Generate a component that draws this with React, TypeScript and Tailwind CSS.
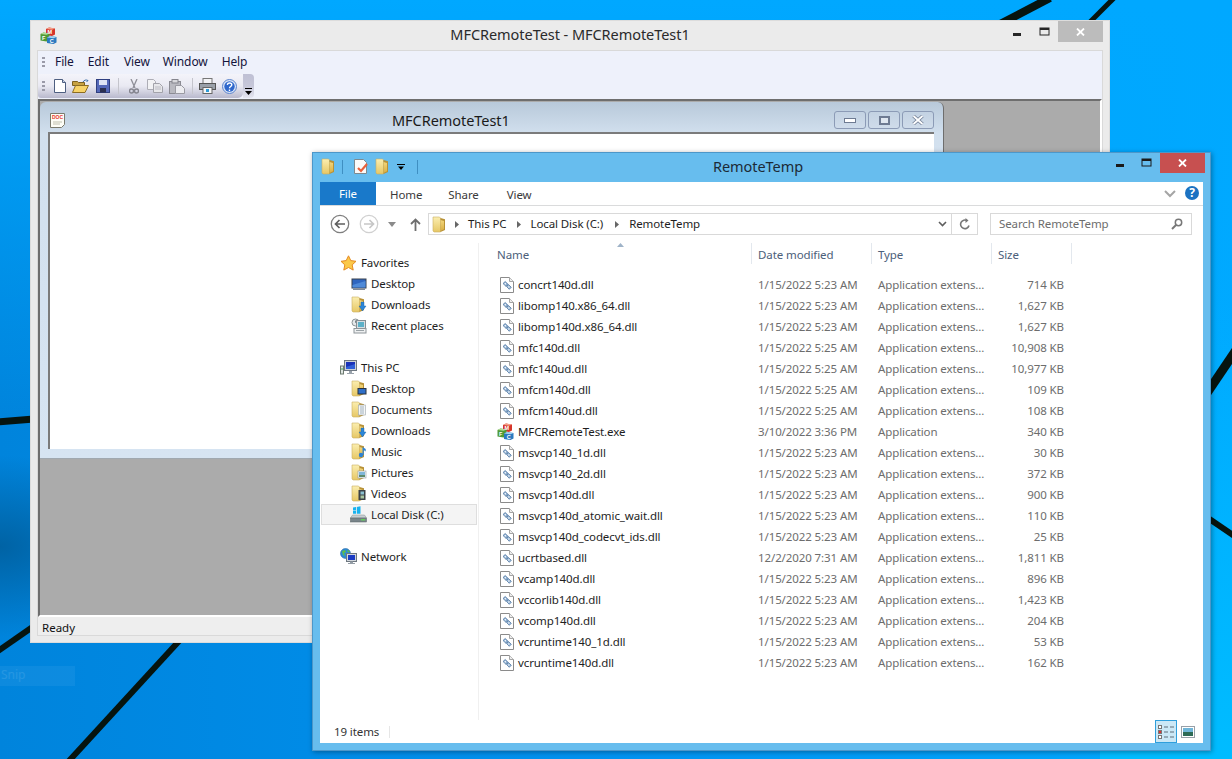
const files = [
  ["concrt140d.dll", "1/15/2022 5:23 AM", "Application extens...", "714 KB"],
  ["libomp140.x86_64.dll", "1/15/2022 5:23 AM", "Application extens...", "1,627 KB"],
  ["libomp140d.x86_64.dll", "1/15/2022 5:23 AM", "Application extens...", "1,627 KB"],
  ["mfc140d.dll", "1/15/2022 5:25 AM", "Application extens...", "10,908 KB"],
  ["mfc140ud.dll", "1/15/2022 5:25 AM", "Application extens...", "10,977 KB"],
  ["mfcm140d.dll", "1/15/2022 5:25 AM", "Application extens...", "109 KB"],
  ["mfcm140ud.dll", "1/15/2022 5:25 AM", "Application extens...", "108 KB"],
  ["MFCRemoteTest.exe", "3/10/2022 3:36 PM", "Application", "340 KB"],
  ["msvcp140_1d.dll", "1/15/2022 5:23 AM", "Application extens...", "30 KB"],
  ["msvcp140_2d.dll", "1/15/2022 5:23 AM", "Application extens...", "372 KB"],
  ["msvcp140d.dll", "1/15/2022 5:23 AM", "Application extens...", "900 KB"],
  ["msvcp140d_atomic_wait.dll", "1/15/2022 5:23 AM", "Application extens...", "110 KB"],
  ["msvcp140d_codecvt_ids.dll", "1/15/2022 5:23 AM", "Application extens...", "25 KB"],
  ["ucrtbased.dll", "12/2/2020 7:31 AM", "Application extens...", "1,811 KB"],
  ["vcamp140d.dll", "1/15/2022 5:23 AM", "Application extens...", "896 KB"],
  ["vccorlib140d.dll", "1/15/2022 5:23 AM", "Application extens...", "1,423 KB"],
  ["vcomp140d.dll", "1/15/2022 5:23 AM", "Application extens...", "204 KB"],
  ["vcruntime140_1d.dll", "1/15/2022 5:23 AM", "Application extens...", "53 KB"],
  ["vcruntime140d.dll", "1/15/2022 5:23 AM", "Application extens...", "162 KB"],
];

const Folder = ({ children }: { children?: React.ReactNode }) => (
  <svg width="16" height="17" viewBox="0 0 16 17" className="shrink-0">
    <defs>
      <linearGradient id="folderBack" x1="0" y1="0" x2="0" y2="1">
        <stop offset="0" stopColor="#fbeeb0" />
        <stop offset="1" stopColor="#e6c765" />
      </linearGradient>
      <linearGradient id="folderFront" x1="0" y1="0" x2="0" y2="1">
        <stop offset="0" stopColor="#f2d67c" />
        <stop offset="1" stopColor="#d9ae42" />
      </linearGradient>
    </defs>
    <path d="M1 1h6.500l1 1v14H2l-1-1z" fill="url(#folderBack)" stroke="#c9ae62" strokeWidth="0.6" />
    <path d="M8.500 2l4.500 1.200v10.800L8.500 16z" fill="#b89136" />
    <path d="M8.500 4l3.500.9v8.400L8.500 15z" fill="url(#folderFront)" />
    {children}
  </svg>
);

const Arrow = () => <path d="M10 6h3v4h2l-3.500 5L8 10h2z" fill="#2b86d8" stroke="#145a9e" strokeWidth="0.4" />;

const DllIcon = () => (
  <svg width="14" height="16" viewBox="0 0 14 16" className="shrink-0">
    <path d="M.5.5h9l4 4v11H.5z" fill="#fff" stroke="#8b8b8b" />
    <path d="M9.500.5v4h4" fill="#eee" stroke="#a5a5a5" />
    <g fill="#8fb0d2" stroke="#47709c" strokeWidth="0.7">
      <path d="M3 6.500l2.200-2L8 7.200 6 9.300z" />
      <path d="M6.500 9.500l2-2 2.800 2.800-2 2z" />
    </g>
    <circle cx="5.300" cy="6.800" r="0.8" fill="#fff" />
    <circle cx="8.900" cy="10" r="0.8" fill="#fff" />
  </svg>
);

const MfcIcon = () => (
  <svg width="17" height="17" viewBox="0 0 17 17" className="shrink-0">
    <path d="M6 2l3-1.500 6 1v6l-3 1.500-6-1z" fill="#d5352a" />
    <path d="M9 .5l6 1-3 1.200-6-.7z" fill="#f4a088" />
    <path d="M.5 7l3-1.500 6 1v6.500l-3 1.500-6-1z" fill="#4f9a36" />
    <path d="M3.500 5.500l6 1-3 1.200-6-.7z" fill="#b4dc98" />
    <path d="M7 10.500l3-1.500 6.500 1v5.500l-3 1.500L7 16z" fill="#2a7ac0" />
    <path d="M10 9l6.500 1-3 1.200L7 10.500z" fill="#a4d4f2" />
    <text x="7.400" y="7.400" fontSize="5.500" fontWeight="700" fill="#fff" fontFamily="'Liberation Sans',sans-serif">M</text>
    <text x="2" y="12.600" fontSize="5.500" fontWeight="700" fill="#fff" fontFamily="'Liberation Sans',sans-serif">F</text>
    <text x="9.800" y="15.700" fontSize="5.500" fontWeight="700" fill="#fff" fontFamily="'Liberation Sans',sans-serif">C</text>
  </svg>
);

const Star = () => (
  <svg width="17" height="16" viewBox="0 0 17 16" className="shrink-0">
    <path d="M8.500.8l2.300 4.800 5.200.7-3.800 3.600 1 5.200-4.700-2.600-4.700 2.600 1-5.200L1 6.300l5.200-.7z" fill="#fbc94a" stroke="#e58a22" />
  </svg>
);

const Monitor = () => (
  <svg width="16" height="14" viewBox="0 0 16 14" className="shrink-0">
    <rect x="0.500" y="1.500" width="15" height="10" fill="#39404c" />
    <rect x="1.500" y="2.500" width="13" height="8" fill="#2f66c0" />
    <path d="M1.500 8l13-4v6.500h-13z" fill="#4f8ad8" />
    <rect x="2" y="11.500" width="12" height="1.500" fill="#808a98" />
  </svg>
);

const Recent = () => (
  <svg width="16" height="16" viewBox="0 0 16 16" className="shrink-0">
    <circle cx="4.500" cy="4.500" r="3.500" fill="#e5e8ea" stroke="#8b9396" />
    <path d="M4.500 2.500v2h2" fill="none" stroke="#5d6a70" strokeWidth="0.8" />
    <rect x="5.500" y="2.500" width="9" height="8" fill="#d8dee2" stroke="#868f94" />
    <rect x="7" y="4" width="6" height="5" fill="#5db1c9" />
    <rect x="3" y="10.500" width="12" height="4.500" fill="#eef0f1" stroke="#8e9599" />
    <path d="M5 12.500h8" stroke="#9aa2a6" />
  </svg>
);

const ThisPc = () => (
  <svg width="17" height="16" viewBox="0 0 17 16" className="shrink-0">
    <rect x="0.500" y="6" width="3" height="8" fill="#dfe5e2" stroke="#6d7a70" />
    <rect x="1.500" y="8" width="1" height="2" fill="#3ea84f" />
    <rect x="4.500" y="0.500" width="12" height="10" fill="#cdd2d8" stroke="#6f7882" />
    <rect x="6" y="2" width="9" height="7" fill="#1a32b8" />
    <path d="M6 7l9-3v5H6z" fill="#2f5ed8" />
    <path d="M9 11h3v2h2v1H7v-1h2z" fill="#9aa3ac" />
  </svg>
);

const LocalDisk = () => (
  <svg width="17" height="17" viewBox="0 0 17 17" className="shrink-0">
    <path d="M3 1.500l3-.5v3l-3 .4zM6.800 .9l3.700-.6v3.900l-3.700.4zM3 4.900l3-.3v3.100H3zM6.800 4.500l3.700-.3v3.500H6.800z" fill="#18b2ee" />
    <path d="M2.500 9h12l2 3H.5z" fill="#c8ced2" stroke="#85908f" strokeWidth="0.5" />
    <rect x="0.500" y="12" width="16" height="4" fill="#79858a" stroke="#566063" strokeWidth="0.5" />
    <rect x="11" y="13" width="4" height="1.500" fill="#63d05a" />
  </svg>
);

const Network = () => (
  <svg width="17" height="17" viewBox="0 0 17 17" className="shrink-0">
    <circle cx="5.500" cy="5.500" r="5" fill="#2e8ad6" stroke="#1b5d9b" strokeWidth="0.5" />
    <path d="M2 3l3-1 1 2-2 1 1 3-2-1zM7 1.500l3 2-2 1z" fill="#5fbe4c" />
    <rect x="6.500" y="5.500" width="10" height="8" fill="#d2d7dc" stroke="#6e7780" />
    <rect x="8" y="7" width="7" height="5" fill="#1c3cc4" />
    <path d="M10 13.500h3V15h2v1H8v-1h2z" fill="#949da6" />
  </svg>
);

const FolderIcons: Record<string, React.ReactNode> = {
  Desktop: <Folder><rect x="6.500" y="8" width="9" height="6.500" fill="#29323f" /><rect x="7.500" y="9" width="7" height="4.500" fill="#2f6fc8" /></Folder>,
  Documents: <Folder><rect x="7.500" y="4" width="7" height="10" fill="#f5f7f8" stroke="#9ba5ac" strokeWidth="0.6" /><path d="M9 6h4M9 8h4M9 10h4M9 12h4" stroke="#7f93a8" strokeWidth="0.7" /></Folder>,
  Downloads: <Folder><Arrow /></Folder>,
  Music: <Folder><circle cx="10" cy="12" r="2.200" fill="#2d82d4" /><path d="M11.500 4v8h1.200V7l2 1.500V6z" fill="#2d82d4" /></Folder>,
  Pictures: <Folder><rect x="7" y="7" width="8" height="7" fill="#f3f5f6" stroke="#8f9aa1" strokeWidth="0.6" /><rect x="8" y="8" width="6" height="3" fill="#7fb6d8" /><rect x="8" y="11" width="6" height="2" fill="#5c8a6c" /></Folder>,
  Videos: <Folder><rect x="7.500" y="5" width="7" height="10" fill="#3c4247" /><rect x="9.500" y="6.500" width="3.500" height="3" fill="#8ac0d0" /><rect x="9.500" y="10.500" width="3.500" height="3" fill="#a8c6a0" /></Folder>,
};

const NavRow = ({ label, icon, indent = true, selected = false }: { label: string; icon: React.ReactNode; indent?: boolean; selected?: boolean }) => (
  <div className={`h-[21px] mx-[1px] flex items-center gap-[4px] border ${indent ? "pl-[28px]" : "pl-[18px]"} ${selected ? "border-[#dedede] bg-[#f4f4f4]" : "border-transparent"}`}>
    <span className="w-[17px] flex justify-center">{icon}</span>
    <span className="text-[#1e1e1e]">{label}</span>
  </div>
);

const Explorer = () => (
  <div className="absolute left-[312px] top-[152px] w-[899px] h-[599px] flex flex-col border border-[#4d97c9] bg-[#67bdee] shadow-[1px_1px_5px_rgba(0,0,0,0.35)] font-['Noto_Sans',sans-serif] text-[11.5px] tracking-[-0.1px]">
    <div className="h-[29px] shrink-0 relative flex items-center justify-center">
      <div className="absolute left-[8px] top-[5px] flex items-center">
        <Folder />
        <span className="w-px h-[14px] bg-[#3f8fc2] ml-[5px]" />
        <svg width="16" height="17" viewBox="0 0 16 17" className="ml-[10px]">
          <path d="M1.500 1.500h9l3 3v11h-12z" fill="#fafafa" stroke="#7e8a90" />
          <path d="M5 10l3 3 6-7" fill="none" stroke="#e8603c" strokeWidth="2.200" />
        </svg>
        <span className="ml-[6px]"><Folder /></span>
        <svg width="8" height="8" viewBox="0 0 8 8" className="ml-[6px]"><path d="M0 1h8v1H0zM1 3.500h6L4 7z" fill="#000" /></svg>
        <span className="w-px h-[14px] bg-[#3f8fc2] ml-[12px]" />
      </div>
      <span className="text-[14.5px] text-[#1c2a36] mr-[7px] mb-[2px] tracking-[-0.05px]">RemoteTemp</span>
      <div className="absolute right-[5px] top-0 flex items-start">
        <svg width="8" height="3" className="mr-[17px] mt-[11px]"><rect width="8" height="3" fill="#1a1a1a" /></svg>
        <svg width="11" height="9" className="mr-[8px] mt-[5px]"><rect x="1" y="1" width="9" height="7" fill="none" stroke="#1a1a1a" /><rect x="1" y="1" width="9" height="2" fill="#1a1a1a" /></svg>
        <div className="w-[45px] h-[20px] bg-[#c75050] flex items-center justify-center">
          <svg width="9" height="8" viewBox="0 0 9 8"><path d="M1 .5l7 7M8 .5l-7 7" stroke="#fff" strokeWidth="1.800" /></svg>
        </div>
      </div>
    </div>
    <div className="flex-1 min-h-0 mx-[7px] mb-[7px] bg-white flex flex-col">
      <div className="h-[24px] shrink-0 flex items-stretch border-b border-[#dadbdc] relative">
        <div className="w-[56px] bg-[#1979ca] text-white flex items-center justify-center">File</div>
        <span className="ml-[14px] self-center mt-[2px] text-[#3a3a3a]">Home</span>
        <span className="ml-[26px] self-center mt-[2px] text-[#3a3a3a]">Share</span>
        <span className="ml-[28px] self-center mt-[2px] text-[#3a3a3a]">View</span>
        <svg width="12" height="8" viewBox="0 0 12 8" className="absolute right-[27px] top-[8px]"><path d="M1 1l5 5 5-5" fill="none" stroke="#a5a5a5" strokeWidth="2" /></svg>
        <div className="absolute right-[4px] top-[4px] w-[14px] h-[14px] rounded-full bg-[#1b72c2] text-white text-[12px] font-bold flex items-center justify-center leading-none">?</div>
      </div>
      <div className="h-[22px] mt-[7px] shrink-0 flex items-center relative">
        <svg width="20" height="20" viewBox="0 0 20 20" className="ml-[10px]"><circle cx="10" cy="10" r="8.700" fill="#fff" stroke="#7e7e7e" strokeWidth="1.300" /><path d="M15 10H6M9.500 6L5.500 10l4 4" fill="none" stroke="#5f5f5f" strokeWidth="1.700" /></svg>
        <svg width="20" height="20" viewBox="0 0 20 20" className="ml-[9px]"><circle cx="10" cy="10" r="8.700" fill="#fff" stroke="#d0d0d0" strokeWidth="1.300" /><path d="M5 10h9M10.500 6l4 4-4 4" fill="none" stroke="#c6c6c6" strokeWidth="1.700" /></svg>
        <svg width="8" height="5" viewBox="0 0 8 5" className="ml-[9px]"><path d="M0 0h8L4 5z" fill="#8a8a8a" /></svg>
        <svg width="11" height="13" viewBox="0 0 11 13" className="ml-[14px]"><path d="M5.500 13V2M1 6l4.500-4.500L10 6" fill="none" stroke="#6e6e6e" strokeWidth="1.800" /></svg>
        <div className="ml-[7px] w-[550px] h-[22px] border border-[#d9d9d9] flex items-center">
          <span className="ml-[3px]"><Folder /></span>
          <svg width="4" height="7" className="ml-[7px]"><path d="M0 0l4 3.500L0 7z" fill="#666" /></svg>
          <span className="ml-[9px] text-[#1e1e1e]">This PC</span>
          <svg width="4" height="7" className="ml-[10px]"><path d="M0 0l4 3.500L0 7z" fill="#666" /></svg>
          <span className="ml-[10px] text-[#1e1e1e]">Local Disk (C:)</span>
          <svg width="4" height="7" className="ml-[12px]"><path d="M0 0l4 3.500L0 7z" fill="#666" /></svg>
          <span className="ml-[10px] text-[#1e1e1e]">RemoteTemp</span>
          <svg width="9" height="6" viewBox="0 0 9 6" className="ml-auto mr-[4px]"><path d="M1 1l3.500 3.500L8 1" fill="none" stroke="#5e5e5e" strokeWidth="1.600" /></svg>
          <div className="w-[26px] h-full border-l border-[#d9d9d9] flex items-center justify-center">
            <svg width="12" height="12" viewBox="0 0 12 12"><path d="M10 7.500A4.300 4.300 0 1 1 8.200 2.700" fill="none" stroke="#777" strokeWidth="1.600" /><path d="M6.500 0v5l3-2.500z" fill="#777" /></svg>
          </div>
        </div>
        <div className="ml-[12px] w-[202px] h-[22px] border border-[#d9d9d9] flex items-center justify-between pl-[8px] pr-[8px] text-[#6d6d6d]">
          <span>Search RemoteTemp</span>
          <svg width="12" height="12" viewBox="0 0 12 12"><circle cx="7.500" cy="4.500" r="3.200" fill="none" stroke="#777" strokeWidth="1.500" /><path d="M5 7l-4 4" stroke="#777" strokeWidth="2" /></svg>
        </div>
      </div>
      <div className="flex-1 min-h-0 flex">
        <div className="w-[159px] shrink-0 mt-[8px] pt-[9px] border-r border-[#f0f0f0]">
          <NavRow label="Favorites" icon={<Star />} indent={false} />
          <NavRow label="Desktop" icon={<Monitor />} />
          <NavRow label="Downloads" icon={FolderIcons.Downloads} />
          <NavRow label="Recent places" icon={<Recent />} />
          <div className="h-[21px]" />
          <NavRow label="This PC" icon={<ThisPc />} indent={false} />
          <NavRow label="Desktop" icon={FolderIcons.Desktop} />
          <NavRow label="Documents" icon={FolderIcons.Documents} />
          <NavRow label="Downloads" icon={FolderIcons.Downloads} />
          <NavRow label="Music" icon={FolderIcons.Music} />
          <NavRow label="Pictures" icon={FolderIcons.Pictures} />
          <NavRow label="Videos" icon={FolderIcons.Videos} />
          <NavRow label="Local Disk (C:)" icon={<LocalDisk />} selected />
          <div className="h-[21px]" />
          <NavRow label="Network" icon={<Network />} indent={false} />
        </div>
        <div className="flex-1 min-w-0 pl-[11px] pt-[8px] relative">
          <svg width="7" height="4" className="absolute left-[138px] top-[8px]"><path d="M0 4l3.500-4L7 4z" fill="#9fb3c8" /></svg>
          <div className="h-[21px] grid grid-cols-[262px_120px_120px_80px] text-[#4c607a]">
            <div className="pl-[7px] pt-[2px] flex items-center border-r border-[#e3e8ee]">Name</div>
            <div className="pl-[6px] pt-[2px] flex items-center border-r border-[#e3e8ee]">Date modified</div>
            <div className="pl-[6px] pt-[2px] flex items-center border-r border-[#e3e8ee]">Type</div>
            <div className="pl-[6px] pt-[2px] flex items-center border-r border-[#e3e8ee]">Size</div>
          </div>
          <div className="mt-[10px]">
            {files.map((f) => (
              <div key={f[0]} className="h-[21px] grid grid-cols-[262px_120px_120px_80px] items-center text-[#6d6d6d]">
                <div className="pl-[10px] flex items-center gap-[4px] text-[#1e1e1e]">
                  {f[0].endsWith(".exe") ? <span className="-ml-[3px]"><MfcIcon /></span> : <DllIcon />}
                  <span>{f[0]}</span>
                </div>
                <div className="pl-[6px]">{f[1]}</div>
                <div className="pl-[6px]">{f[2]}</div>
                <div className="pr-[8px] text-right">{f[3]}</div>
              </div>
            ))}
          </div>
        </div>
      </div>
      <div className="h-[23px] shrink-0 flex items-center relative">
        <span className="ml-[14px] text-[#333]">19 items</span>
        <span className="ml-[10px] w-px h-[12px] bg-[#e6e6e6]" />
        <div className="ml-auto mr-[8px] flex items-center">
          <div className="w-[22px] h-[23px] border border-[#2f9fdc] bg-[#cbe8f6] flex items-center justify-center">
            <svg width="16" height="14" viewBox="0 0 16 14">
              <rect x="0.500" y="0.500" width="3" height="3" fill="#fff" stroke="#777" />
              <rect x="0.500" y="5.500" width="3" height="3" fill="#d33" stroke="#777" />
              <rect x="0.500" y="10.500" width="3" height="3" fill="#fff" stroke="#777" />
              <path d="M6 2h4M12 2h4M6 7h4M12 7h4M6 12h4M12 12h4" stroke="#5f6f7a" />
            </svg>
          </div>
          <svg width="14" height="12" viewBox="0 0 14 12" className="ml-[4px]">
            <rect x="0.500" y="0.500" width="13" height="11" fill="#fff" stroke="#98a0a8" />
            <rect x="2" y="2" width="10" height="4" fill="#6fb5d8" />
            <rect x="2" y="6" width="10" height="4" fill="#2d6a55" />
          </svg>
        </div>
      </div>
    </div>
  </div>
);

const ChildButton = ({ children }: { children: React.ReactNode }) => (
  <div className="w-[32px] h-[18px] rounded-[3px] border border-[#8c9bb6] bg-gradient-to-b from-[#c3d2e2] to-[#cfdcea] flex items-center justify-center">{children}</div>
);

const MfcWindow = () => (
  <div className="absolute left-[30px] top-[20px] w-[1080px] h-[623px] flex flex-col border border-[#dcdcdc] bg-[#ebebeb] font-['Noto_Sans',sans-serif] text-[11.5px]">
    <div className="h-[29px] shrink-0 relative flex items-center justify-center">
      <span className="absolute left-[9px] top-[6px]"><MfcIcon /></span>
      <span className="text-[14.5px] text-[#2a2a2a] mb-[2px] tracking-[-0.05px]">MFCRemoteTest - MFCRemoteTest1</span>
      <div className="absolute right-[6px] top-0 flex items-start">
        <svg width="8" height="3" className="mr-[18px] mt-[12px]"><rect width="8" height="3" fill="#262626" /></svg>
        <svg width="11" height="9" className="mr-[8px] mt-[6px]"><rect x="1" y="1" width="9" height="7" fill="none" stroke="#262626" /><rect x="1" y="1" width="9" height="2" fill="#262626" /></svg>
        <div className="w-[45px] h-[21px] bg-[#bcbcbc] flex items-center justify-center">
          <svg width="9" height="8" viewBox="0 0 9 8"><path d="M1 .5l7 7M8 .5l-7 7" stroke="#fff" strokeWidth="1.800" /></svg>
        </div>
      </div>
    </div>
    <div className="flex-1 min-h-0 mx-[6px] mb-[6px] border border-[#d9d9d9] flex flex-col">
      <div className="h-[48px] shrink-0 bg-[#eef1fb] flex flex-col">
        <div className="h-[23px] flex items-center text-[12px] tracking-[-0.1px] text-[#14143c]">
          <svg width="3" height="11" viewBox="0 0 3 11" className="ml-[4px]"><path d="M0 0h3v2H0zM0 4h3v2H0zM0 8h3v2H0z" fill="#9a9aa8" /></svg>
          <span className="ml-[10px] mb-[2px]">File</span>
          <span className="ml-[14px] mb-[2px]">Edit</span>
          <span className="ml-[15px] mb-[2px]">View</span>
          <span className="ml-[13px] mb-[2px]">Window</span>
          <span className="ml-[14px] mb-[2px]">Help</span>
        </div>
        <div className="h-[24px] flex items-stretch">
          <div className="w-[205px] rounded-br-[5px] rounded-l-[3px] bg-gradient-to-b from-[#f4f4fa] via-[#e9e9f2] to-[#b9b9cd] flex items-center">
            <svg width="3" height="11" viewBox="0 0 3 11" className="ml-[4px]"><path d="M0 0h3v2H0zM0 4h3v2H0zM0 8h3v2H0z" fill="#9a9aa8" /></svg>
            <svg width="12" height="14" viewBox="0 0 12 14" className="ml-[9px]"><path d="M.5.5h8l3 3v10H.5z" fill="#fff" stroke="#4e5f80" /><path d="M8.500.5v3h3" fill="#c8d4ea" stroke="#4e5f80" /></svg>
            <svg width="18" height="14" viewBox="0 0 18 14" className="ml-[6px]"><path d="M.5 2.500h5l1 1h6v3h-12z" fill="#c7a242" stroke="#7c6120" /><path d="M.5 13.500l3-7h13l-3.500 7z" fill="#f7d368" stroke="#8c6d22" /><path d="M11 3c1-2 3-2.500 5-1.500l-1.500 1.500" fill="none" stroke="#3a6da8" /></svg>
            <svg width="14" height="14" viewBox="0 0 14 14" className="ml-[6px]"><rect x="0.500" y="0.500" width="13" height="13" fill="#5468b8" stroke="#2f3f80" /><rect x="3" y="1" width="8" height="5" fill="#dfe5f5" /><rect x="4" y="9" width="6" height="4.500" fill="#2a2f50" /></svg>
            <span className="ml-[8px] w-px h-[16px] bg-[#c4c4cc]" />
            <svg width="10" height="15" viewBox="0 0 10 15" className="ml-[10px]"><path d="M2 0l4 9M8 0L4 9" stroke="#8f8f98" strokeWidth="1.300" fill="none" /><circle cx="2.500" cy="12" r="2" fill="none" stroke="#84848e" strokeWidth="1.400" /><circle cx="7.500" cy="12" r="2" fill="none" stroke="#84848e" strokeWidth="1.400" /></svg>
            <svg width="16" height="14" viewBox="0 0 16 14" className="ml-[8px]"><path d="M.5.5h6l2 2v8h-8z" fill="#f2f2f4" stroke="#adadb5" /><path d="M6.500 4.500h6l3 3v6h-9z" fill="#e7e7ea" stroke="#a2a2aa" /><path d="M8 8h6M8 10h6" stroke="#bcbcc4" /></svg>
            <svg width="16" height="15" viewBox="0 0 16 15" className="ml-[6px]"><rect x="0.500" y="2.500" width="11" height="12" fill="#b9b9c0" stroke="#8b8b93" /><rect x="3" y="0.500" width="6" height="3.500" fill="#d8d8dc" stroke="#85858d" /><path d="M6.500 6.500h6l3 3v5h-9z" fill="#ececf0" stroke="#9a9aa2" /></svg>
            <span className="ml-[7px] w-px h-[16px] bg-[#c4c4cc]" />
            <svg width="17" height="16" viewBox="0 0 17 16" className="ml-[6px]"><rect x="4" y="0.500" width="9" height="5" fill="#f3f3f5" stroke="#777" /><rect x="0.500" y="5.500" width="16" height="6" fill="#9aa0a8" stroke="#555" /><rect x="4" y="9.500" width="9" height="6" fill="#f8f8f8" stroke="#666" /><rect x="7" y="11" width="3" height="3" fill="#2f9bd8" /></svg>
            <svg width="15" height="15" viewBox="0 0 15 15" className="ml-[6px]"><circle cx="7.500" cy="7.500" r="7" fill="#dbe6f8" stroke="#5c84cc" /><circle cx="7.500" cy="7.500" r="5.200" fill="#2f68cc" /><path d="M5.300 5.800c.3-2.500 4.500-2.500 4.500 0 0 1.800-2.300 1.600-2.300 3.400M7.500 10.500v1.500" fill="none" stroke="#fff" strokeWidth="1.400" /></svg>
          </div>
          <div className="w-[11px] rounded-r-[4px] bg-gradient-to-b from-[#bfc0d4] via-[#c6c7d9] to-[#e4e5f0] flex items-end justify-center pb-[3px]">
            <svg width="7" height="7" viewBox="0 0 7 7"><path d="M0 0h7v1H0zM0 3h7L3.500 7z" fill="#000" /></svg>
          </div>
        </div>
      </div>
      <div className="flex-1 min-h-0 border-t-2 border-l-2 border-[#6e6e6e] border-r-2 border-r-white border-b-2 border-b-white bg-[#ababab] pt-[1px]">
        <div className="w-[904px] h-[357px] rounded-t-[6px] border-r border-b border-r-[#6e6e6e] border-b-[#a0a8b0] bg-gradient-to-b from-[#b8c9da] via-[#d2e0ee] via-[9%] to-[#d6e4f2] flex flex-col">
          <div className="h-[30px] shrink-0 pt-[8px] relative flex items-center">
            <svg width="15" height="16" viewBox="0 0 15 16" className="ml-[10px]"><path d="M.5.5h14v11l-3 3H.5z" fill="#fdfdf6" stroke="#7a7a6e" /><text x="2" y="6" fontSize="5" fontWeight="700" fill="#e8362e" fontFamily="'Liberation Sans',sans-serif">DOC</text><path d="M3 9h9M3 11h7" stroke="#bfbfae" /></svg>
            <span className="ml-[327px] text-[14.5px] tracking-[-0.05px] text-[#1a1a1a]">MFCRemoteTest1</span>
            <div className="absolute right-[9px] top-[9px] flex gap-[2px]">
              <ChildButton><span className="w-[12px] h-[5px] border border-[#6e7b92] bg-white" /></ChildButton>
              <ChildButton><span className="w-[11px] h-[9px] border-2 border-[#6e7b92] bg-[#dfe7f0]" /></ChildButton>
              <ChildButton>
                <svg width="12" height="10" viewBox="0 0 12 10"><path d="M1.500 1l9 8M10.500 1l-9 8" stroke="#6e7b92" strokeWidth="3.400" /><path d="M1.500 1l9 8M10.500 1l-9 8" stroke="#fff" strokeWidth="1.800" /></svg>
              </ChildButton>
            </div>
          </div>
          <div className="w-[886px] ml-[8px] h-[317px] bg-white border-t-2 border-l-2 border-[#7b7b7b]" />
        </div>
      </div>
      <div className="h-[18px] pt-[3px] shrink-0 bg-[#eeeeee] flex items-center pl-[4px] text-[#111]">Ready</div>
    </div>
  </div>
);

export default function App() {
  return (
    <div className="relative w-[1232px] h-[759px] overflow-hidden bg-[#0090ec]">
      <svg width="1232" height="759" viewBox="0 0 1232 759" className="absolute inset-0">
        <defs>
          <linearGradient id="base" x1="0" y1="0" x2="1" y2="0">
            <stop offset="0" stopColor="#0084dc" />
            <stop offset="0.5" stopColor="#0092f0" />
            <stop offset="1" stopColor="#00aaff" />
          </linearGradient>
          <linearGradient id="top" x1="0" y1="0" x2="0" y2="1">
            <stop offset="0" stopColor="#00a8ff" stopOpacity="1" />
            <stop offset="0.55" stopColor="#00a8ff" stopOpacity="0" />
          </linearGradient>
          <linearGradient id="right" x1="0" y1="0" x2="0" y2="1">
            <stop offset="0.4" stopColor="#00bcff" stopOpacity="0" />
            <stop offset="1" stopColor="#00bcff" stopOpacity="1" />
          </linearGradient>
          <radialGradient id="dark" cx="0" cy="0.72" r="0.12">
            <stop offset="0" stopColor="#005f9e" stopOpacity="0.9" />
            <stop offset="1" stopColor="#005f9e" stopOpacity="0" />
          </radialGradient>
        </defs>
        <rect width="1232" height="759" fill="url(#base)" />
        <rect width="1232" height="759" fill="url(#top)" />
        <rect x="1100" width="132" height="759" fill="url(#right)" />
        <rect width="1232" height="759" fill="url(#dark)" />
        <g stroke="#06140f" fill="none">
          <path d="M1050 -2L1000 24" strokeWidth="8" />
          <path d="M1114 -2L1088 24" strokeWidth="5" />
          <path d="M1205 396L1236 350" strokeWidth="9" />
          <path d="M1205 516L1236 537" strokeWidth="6" />
          <path d="M-2 422L34 419" strokeWidth="7" />
          <path d="M-2 651L34 626" strokeWidth="6" />
          <path d="M180 640L68 762" strokeWidth="6" />
        </g>
      </svg>
      <div className="absolute left-0 top-[666px] w-[75px] h-[20px] bg-white/5 font-['Noto_Sans',sans-serif] text-[12px] text-white/10 pl-[1px]">Snip</div>
      <MfcWindow />
      <Explorer />
    </div>
  );
}
